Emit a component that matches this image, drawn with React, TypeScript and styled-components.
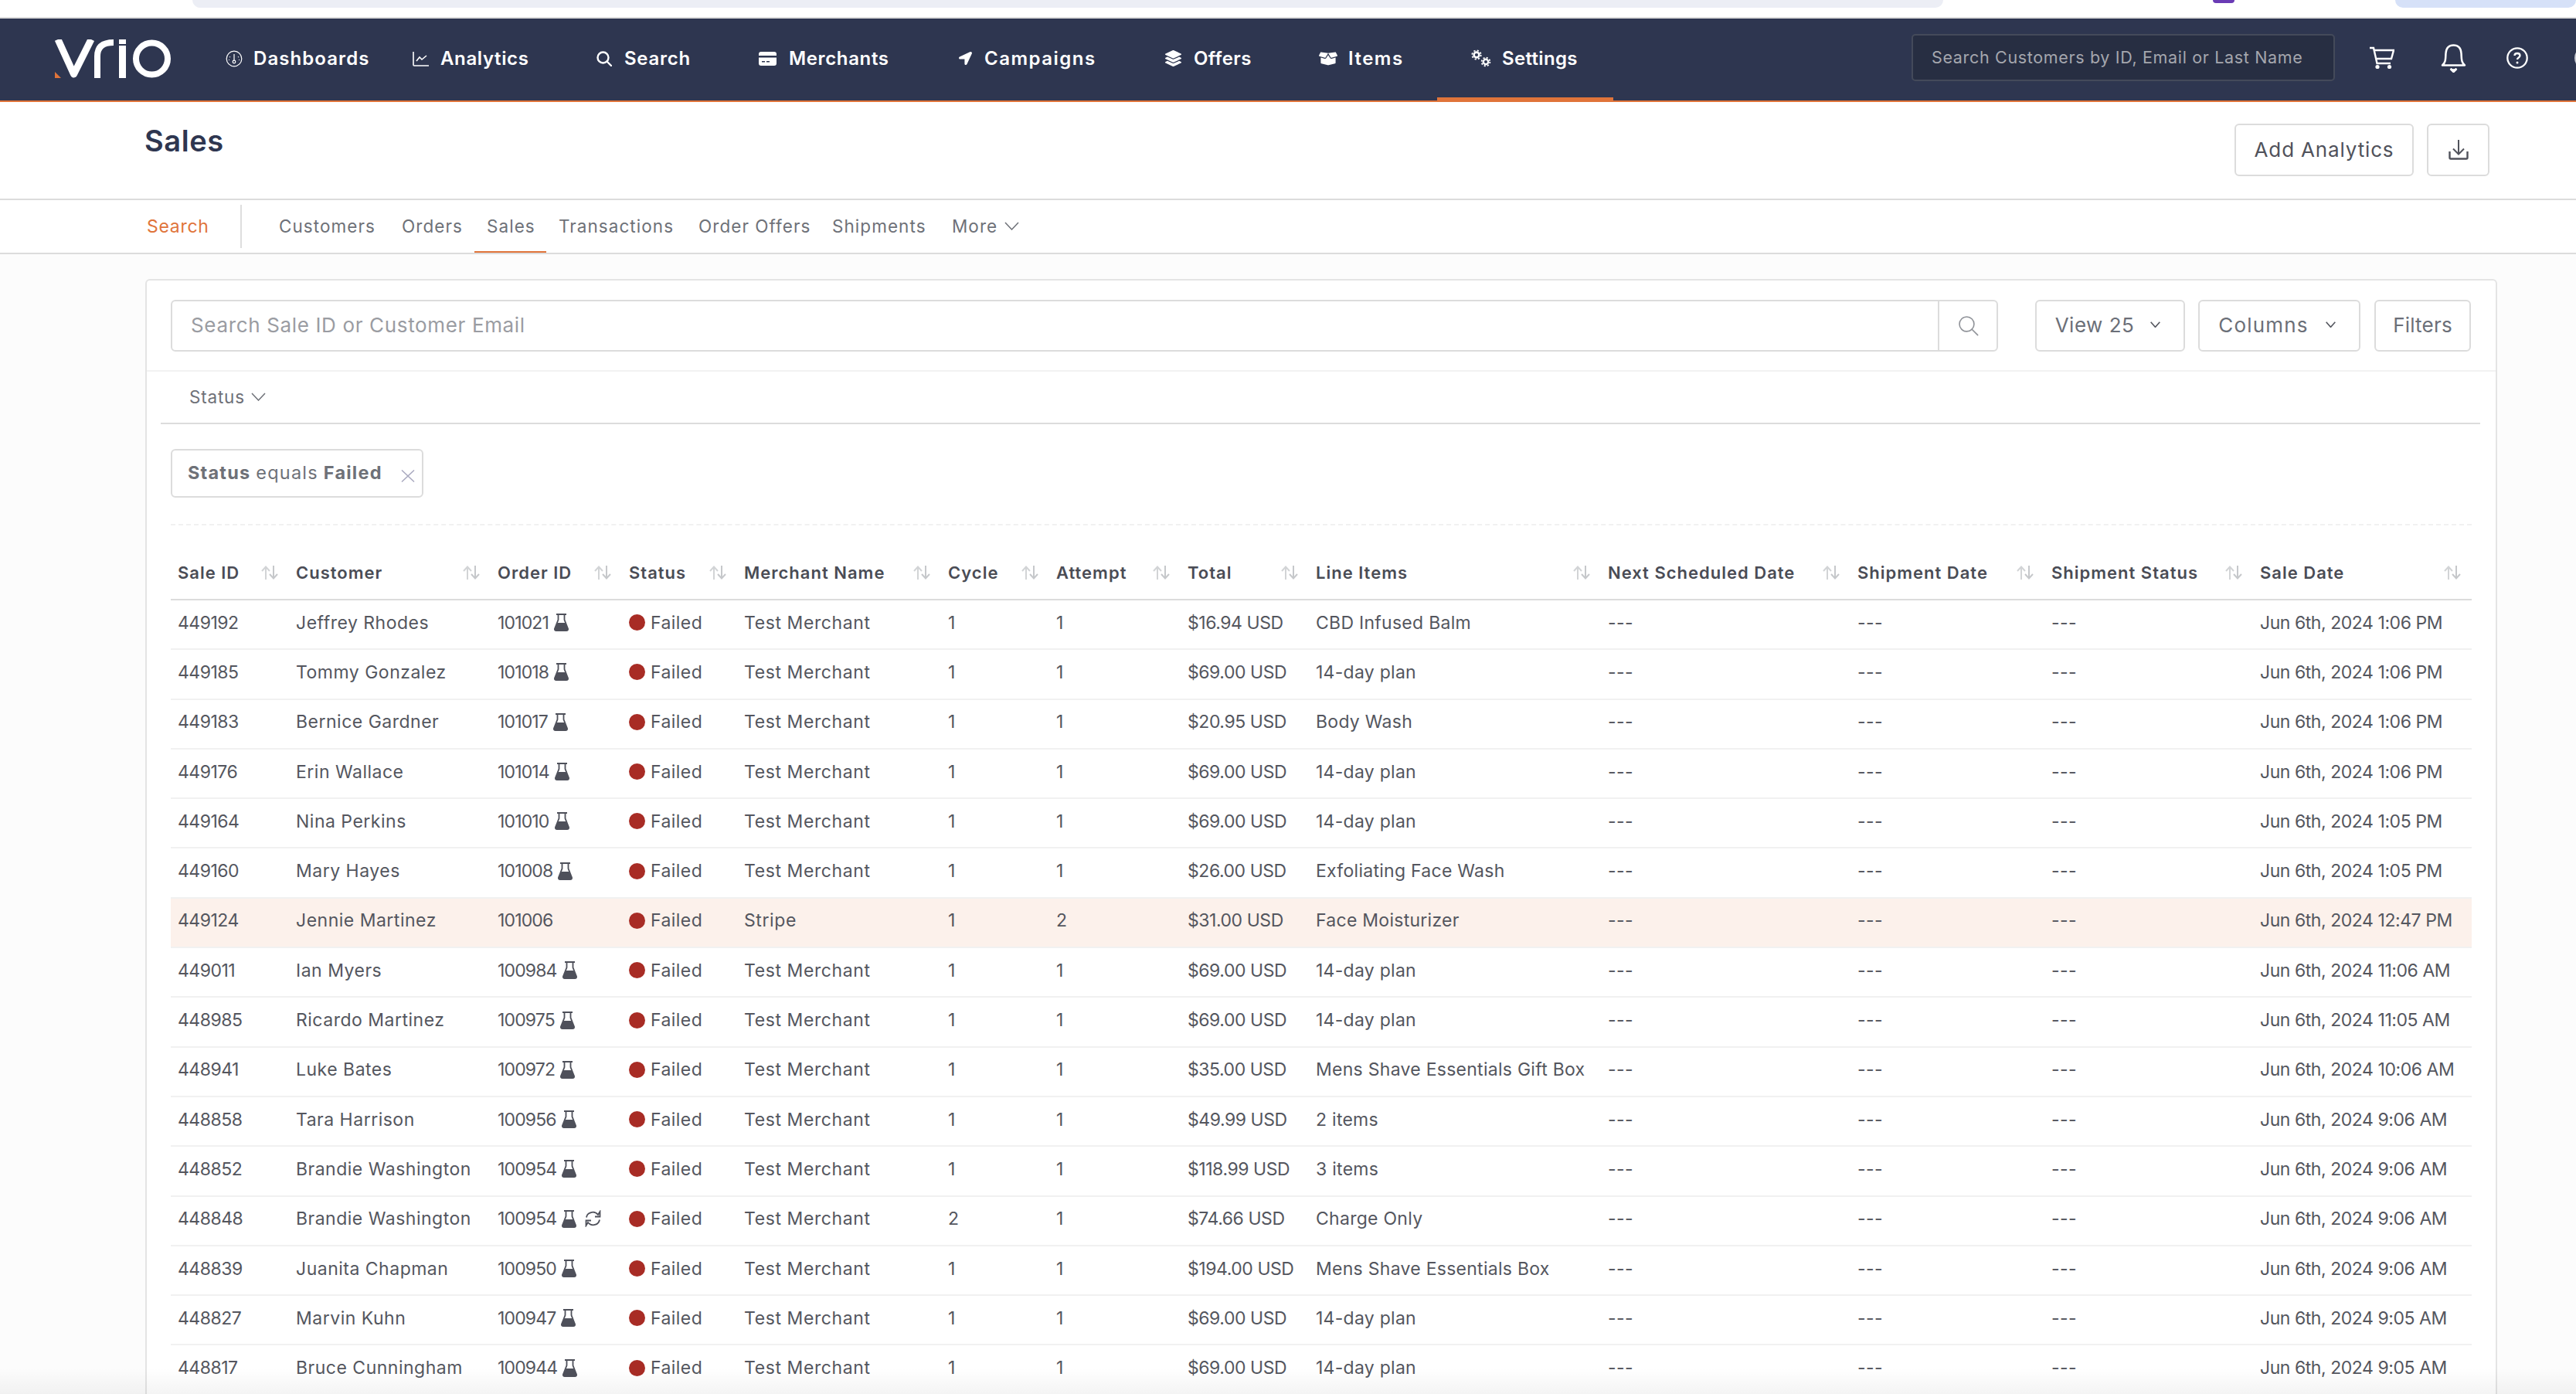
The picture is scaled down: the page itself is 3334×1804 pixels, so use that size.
import React from "react";
import styled, { createGlobalStyle } from "styled-components";
import { FaLocationArrow, FaLayerGroup, FaBoxOpen } from "react-icons/fa";

const Global = createGlobalStyle`
  html, body { margin: 0; padding: 0; height: 1804px; overflow: hidden; background: #fcfcfc; }
  * { box-sizing: border-box; }
  body { font-family: Inter, "Liberation Sans", sans-serif; font-size: 23px; color: #54565e; letter-spacing: 0.4px; }
`;

const Page = styled.div`position: relative; height: 1804px; overflow: hidden; display: flex; flex-direction: column;`;
const BottomFade = styled.div`
  position: absolute; left: 0; right: 0; bottom: 0; height: 34px; pointer-events: none;
  background: linear-gradient(to bottom, rgba(0,0,0,0), rgba(0,0,0,.045));
`;

const TopStrip = styled.div`height: 24px; flex: none; background: #fff; border-bottom: 2px solid #dedede; display: flex; align-items: flex-start;`;
const ChromeTab = styled.div<{ $w: number; $ml: number; $h: number; $c: string }>`
  width: ${p => p.$w}px; margin-left: ${p => p.$ml}px; height: ${p => p.$h}px; background: ${p => p.$c}; flex: none;
  border-radius: 0 0 14px 14px;
`;

const Nav = styled.header`height: 108px; flex: none; background: #2e3650; border-bottom: 2px solid #e0743a; display: flex; align-items: stretch; padding-left: 71px;`;
const LogoWrap = styled.div`display: flex; align-items: center; width: 177px; flex: none; padding-bottom: 2px;`;
const NavList = styled.nav`display: flex; align-items: stretch;`;
const NavItem = styled.a<{ $w: number; $gap: number; $ls: number; $active?: boolean }>`
  position: relative; width: ${p => p.$w}px; padding-left: 44px; display: flex; align-items: center; gap: ${p => p.$gap}px;
  color: #fff; font-weight: 600; font-size: 24px; letter-spacing: ${p => p.$ls}px; padding-bottom: 3px; white-space: nowrap;
  ${p => p.$active ? `&::after { content: ""; position: absolute; left: 0; right: 0; bottom: -2px; height: 6px; background: #e0743a; }` : ""}
`;
const NavIcon = styled.span<{ $w: number }>`width: ${p => p.$w}px; flex: none; display: flex; align-items: center; justify-content: center; color: #fff; margin-right: 2px;`;
const NavSearch = styled.div`
  margin-left: auto; width: 548px; height: 61px; align-self: center; background: #272e42; border: 2px solid #444a5a; border-radius: 5px; flex: none;
  color: #a5a7ae; font-size: 21.5px; letter-spacing: .66px; display: flex; align-items: center; padding-left: 24px; margin-bottom: 6px; white-space: nowrap;
`;
const NavTools = styled.div`display: flex; align-items: center; padding-bottom: 4px; flex: none;`;
const ToolIcon = styled.span<{ $ml: number }>`margin-left: ${p => p.$ml}px; display: flex; flex: none;`;
const AvatarEdge = styled.span`margin-left: 60px; margin-right: -28px; width: 30px; height: 30px; flex: none; border-radius: 50%; background: #c9cbd1;`;

const Header = styled.div`height: 127px; flex: none; background: #fff; border-bottom: 2px solid #dcdcdc; display: flex; justify-content: space-between; padding: 28px 112px 0 187px;`;
const Title = styled.h1`margin: 0; font-size: 38px; line-height: 44px; font-weight: 600; letter-spacing: 0.6px; color: #2e3650;`;
const HeaderActions = styled.div`display: flex; gap: 17px; align-items: flex-start;`;
const OutlineButton = styled.button<{ $w: number; $h?: number; $gap?: number }>`
  width: ${p => p.$w}px; height: ${p => p.$h ?? 68}px; background: #fff; border: 2px solid #dcdcdc; border-radius: 6px; font: inherit;
  display: flex; align-items: center; justify-content: center; gap: ${p => p.$gap ?? 0}px; padding: 0 0 2px; flex: none;
`;
const HeaderButton = styled(OutlineButton)`font-size: 26px; letter-spacing: 0.85px; color: #50525b;`;

const SubNav = styled.div`height: 70px; flex: none; background: #fff; border-bottom: 2px solid #dcdcdc; display: flex; align-items: stretch; padding-left: 190px;`;
const SubSearch = styled.span`width: 121px; display: flex; align-items: center; color: #e0743a; font-size: 23px; letter-spacing: 0.7px; flex: none;`;
const SubDivider = styled.span`width: 2px; height: 56px; margin-top: 6px; background: #dedede; margin-right: 32px; flex: none;`;
const SubLink = styled.a<{ $w: number; $active?: boolean }>`
  position: relative; display: flex; align-items: center; padding: 0 0 2px 16px; width: ${p => p.$w}px; gap: 9px; color: #6e7178; font-size: 22.5px; letter-spacing: 1.05px; flex: none;
  ${p => p.$active ? `&::after { content: ""; position: absolute; left: 0; right: 0; bottom: 0; height: 2px; background: #e0743a; }` : ""}
`;

const Card = styled.section`
  margin: 32px 0 0 188px; width: 3044px; flex: none; background: #fff; border: 2px solid #e4e4e4; border-bottom: 0; border-radius: 6px 6px 0 0;
  padding-top: 25px;
`;
const Toolbar = styled.div`display: flex; align-items: center; padding: 0 0 24px 31px; border-bottom: 2px solid #f2f2f2;`;
const SearchBox = styled.div`width: 2365px; height: 67px; border: 2px solid #dcdcdc; border-radius: 6px; display: flex; flex: none; margin-right: 48px;`;
const SearchPlaceholder = styled.span`flex: 1; display: flex; align-items: center; padding: 0 0 3px 24px; color: #9a9ca2; font-size: 26px; letter-spacing: 0.65px;`;
const SearchBtn = styled.span`width: 76px; border-left: 2px solid #dcdcdc; display: flex; align-items: center; justify-content: center;`;
const ToolButton = styled(OutlineButton)<{ $mr?: number; $ls: number; $pr?: number }>`font-size: 26px; letter-spacing: ${p => p.$ls}px; color: #6b6f78; margin-right: ${p => p.$mr ?? 0}px; padding: 0 ${p => p.$pr ?? 0}px 3px 0;`;

const StatusRow = styled.div`margin: 0 20px 0 18px; height: 68px; border-bottom: 2px solid #dcdcdc; display: flex; align-items: center; padding: 0 0 2px 37px; gap: 8px; color: #6f7178; font-size: 22.5px; letter-spacing: .8px;`;
const ChipRow = styled.div`padding: 32px 0 34px 31px;`;
const Chip = styled.div`
  width: 327px; height: 63px; border: 2px solid #dcdcdc; border-radius: 6px; display: flex; align-items: center; padding: 0 0 2px 20px; color: #6e7178; font-size: 23.5px; letter-spacing: 1.2px; gap: 7px; position: relative; white-space: nowrap;
`;
const ChipStrong = styled.b`font-weight: 700;`;
const ChipClose = styled.span`position: absolute; left: 296px; top: 25px; display: flex;`;

const TableWrap = styled.div`margin: 0 31px; border-top: 2px dashed #f1f1f1; padding-top: 29px;`;
const widths = "153px 261px 170px 149px 264px 140px 170px 166px 378px 323px 251px 270px 283px";
const HeadRow = styled.div`display: grid; grid-template-columns: ${widths}; height: 68px; border-bottom: 2px solid #dcdcdc;`;
const HeadCell = styled.div`display: flex; align-items: center; justify-content: space-between; padding: 0 14px 2px 9px; color: #4a4c55; font-weight: 600; font-size: 22px; letter-spacing: 1px; white-space: nowrap;`;
const Row = styled.div<{ $hi?: boolean }>`display: grid; grid-template-columns: ${widths}; height: 64.3px; border-bottom: 2px solid #f1f1f1; background: ${p => p.$hi ? "#fcf1eb" : "transparent"};`;
const Cell = styled.div<{ $ls?: number }>`display: flex; align-items: center; padding: 0 0 5px 9px; white-space: nowrap; color: #54565e; gap: 7px; letter-spacing: ${p => p.$ls ?? 0.4}px;`;
const Dot = styled.span`width: 21px; height: 21px; border-radius: 50%; background: #a82c25; flex: none;`;

const Logo = () => (
  <svg width="150" height="50" viewBox="0 0 150 50">
    <path d="M4 0 L24.500 45 L47 0" fill="none" stroke="#fff" strokeWidth="9" strokeLinejoin="round" />
    <path d="M55 50 V22 C55 9 63 4 76 4" fill="none" stroke="#fff" strokeWidth="8" />
    <rect x="83" y="0" width="9" height="6" fill="#fff" />
    <rect x="83" y="8" width="9" height="42" fill="#fff" />
    <circle cx="125.500" cy="25" r="20.500" fill="none" stroke="#fff" strokeWidth="8" />
    <path d="M0 42 L8 50 H0 Z" fill="#e0743a" />
  </svg>
);

const GaugeIcon = () => (
  <svg width="22" height="22" viewBox="0 0 22 22" fill="none" stroke="#fff" strokeWidth="1.200">
    <circle cx="11" cy="11" r="9.800" />
    <circle cx="11" cy="15" r="1.800" />
    <path d="M11 13 V5 M5 8.500 l1 .6 M17 8.500 l-1 .6 M4 12.500 h1 M17 12.500 h1" />
  </svg>
);
const ChartIcon = () => (
  <svg width="22" height="20" viewBox="0 0 22 20" fill="none" stroke="#fff" strokeWidth="1.600">
    <path d="M1 1 V18 a1 1 0 0 0 1 1 H21" />
    <path d="M5 13 L9 8 L12 11 L18 6" />
  </svg>
);
const LensIcon = ({ size = 20, stroke = "#fff", w = 2.4 }: { size?: number; stroke?: string; w?: number }) => (
  <svg width={size} height={size} viewBox="0 0 20 20" fill="none" stroke={stroke} strokeWidth={w} strokeLinecap="round">
    <circle cx="8.500" cy="8.500" r="7" />
    <path d="M13.500 13.500 L19 19" />
  </svg>
);
const CardIcon = () => (
  <svg width="23" height="18" viewBox="0 0 23 18" fill="#fff">
    <path d="M3 0 H20 a3 3 0 0 1 3 3 V5 H0 V3 a3 3 0 0 1 3 -3 Z" />
    <path fillRule="evenodd" d="M0 7.500 H23 V15 a3 3 0 0 1 -3 3 H3 a3 3 0 0 1 -3 -3 Z M4 12 v1.500 h4 V12 Z M10 12 v1.500 h4 V12 Z" />
  </svg>
);
const GearsIcon = () => (
  <svg width="26" height="23" viewBox="0 0 26 23" fill="none" stroke="#fff">
    <circle cx="7" cy="7" r="3.400" strokeWidth="2.600" />
    <circle cx="7" cy="7" r="5.700" strokeWidth="1.800" strokeDasharray="2.200 2.280" />
    <circle cx="19" cy="16" r="3.200" strokeWidth="2.400" />
    <circle cx="19" cy="16" r="5.400" strokeWidth="1.800" strokeDasharray="2.100 2.140" />
  </svg>
);
const CartIcon = () => (
  <svg width="32" height="30" viewBox="0 0 32 30" fill="none" stroke="#fff" strokeWidth="2.400">
    <path d="M0 2 H5 L9.500 22 H27" />
    <path d="M6 5 H31 L28 16 H8.500" />
    <circle cx="10" cy="26.500" r="2.600" fill="#fff" stroke="none" />
    <circle cx="25.500" cy="26.500" r="2.600" fill="#fff" stroke="none" />
  </svg>
);
const BellIcon = () => (
  <svg width="33" height="37" viewBox="0 0 33 37" fill="none" stroke="#fff" strokeWidth="2.500">
    <path d="M2 27.500 C7 23 6 18 6.500 12 C7 5 11 1.500 16.500 1.500 C22 1.500 26 5 26.500 12 C27 18 26 23 31 27.500 Z" strokeLinejoin="round" />
    <path d="M12.500 32 Q16.500 35 20.500 32 L16.500 36 Z" fill="#fff" />
  </svg>
);
const HelpIcon = () => (
  <svg width="28" height="28" viewBox="0 0 28 28" fill="none">
    <circle cx="14" cy="14" r="12.700" stroke="#fff" strokeWidth="2.300" />
    <path d="M10.500 11 C10.500 7 17.500 7 17.500 11 C17.500 13.500 14 13.500 14 16" stroke="#fff" strokeWidth="2.300" />
    <circle cx="14" cy="20" r="1.500" fill="#fff" />
  </svg>
);
const DownloadIcon = () => (
  <svg width="26" height="27" viewBox="0 0 26 27" fill="none" stroke="#50525b" strokeWidth="2">
    <path d="M13 1 V19 M6 12.500 L13 19.500 L20 12.500" />
    <path d="M1.500 16 V24 a1.500 1.500 0 0 0 1.500 1.500 H23 a1.500 1.500 0 0 0 1.500 -1.500 V16" strokeWidth="2.400" />
  </svg>
);
const Chevron = ({ w = 19, h = 11, c = "#6e7178", sw = 1.5 }: { w?: number; h?: number; c?: string; sw?: number }) => (
  <svg width={w} height={h} viewBox="0 0 19 11" fill="none" stroke={c} strokeWidth={sw} preserveAspectRatio="none">
    <path d="M1 1 L9.500 10 L18 1" />
  </svg>
);
const SortIcon = () => (
  <svg width="22" height="18" viewBox="0 0 22 18" fill="none" strokeWidth="2" style={{ flex: "none" }}>
    <path d="M6 18 V2 M1 7 L6 1.500 L11 7" stroke="#d2d4d6" />
    <path d="M16 0 V16 M11 11 L16 16.500 L21 11" stroke="#c6c8cb" />
  </svg>
);
const FlaskIcon = () => (
  <svg width="19" height="23" viewBox="0 0 19 23" style={{ flex: "none" }}>
    <path d="M3 1 H16 M5.500 1 V8 L1 19.500 Q.5 22 3 22 H16 Q18.500 22 18 19.500 L13.500 8 V1" fill="none" stroke="#4e505a" strokeWidth="1.800" />
    <path d="M4.500 12 H14.500 L18 19.500 Q18.500 22 16 22 H3 Q.5 22 1 19.500 Z" fill="#4e505a" />
  </svg>
);
const SyncIcon = () => (
  <svg width="21" height="22" viewBox="0 0 21 22" fill="none" stroke="#4e505a" strokeWidth="1.800" style={{ flex: "none", marginLeft: 4 }}>
    <path d="M2 9.500 C3 3 12 0 17 6 L19.500 2 V8.500 H13" />
    <path d="M19 12.500 C18 19 9 22 4 16 L1.500 20 V13.500 H8" />
  </svg>
);

type Item = { label: string; w: number; iconW: number; gap: number; ls: number; icon: React.ReactNode; active?: boolean };
const navItems: Item[] = [
  { label: "Dashboards", w: 242, iconW: 22, gap: 12, ls: 1.07, icon: <GaugeIcon /> },
  { label: "Analytics", w: 238, iconW: 22, gap: 12, ls: 0.63, icon: <ChartIcon /> },
  { label: "Search", w: 210, iconW: 20, gap: 14, ls: 0.74, icon: <LensIcon /> },
  { label: "Merchants", w: 258, iconW: 23, gap: 14, ls: 0.63, icon: <CardIcon /> },
  { label: "Campaigns", w: 267, iconW: 18, gap: 14, ls: 1.5, icon: <FaLocationArrow size={17} /> },
  { label: "Offers", w: 200, iconW: 22, gap: 14, ls: 0.4, icon: <FaLayerGroup size={21} /> },
  { label: "Items", w: 197, iconW: 24, gap: 12, ls: 1.47, icon: <FaBoxOpen size={24} /> },
  { label: "Settings", w: 228, iconW: 26, gap: 12, ls: 0.32, icon: <GearsIcon />, active: true },
];

const subLinks = [
  { l: "Customers", w: 159 },
  { l: "Orders", w: 110 },
  { l: "Sales", w: 93, active: true },
  { l: "Transactions", w: 181 },
  { l: "Order Offers", w: 173 },
  { l: "Shipments", w: 155 },
];

const heads = ["Sale ID", "Customer", "Order ID", "Status", "Merchant Name", "Cycle", "Attempt", "Total", "Line Items", "Next Scheduled Date", "Shipment Date", "Shipment Status", "Sale Date"];

type R = [string, string, string, string, string, string, string, string, string, boolean?, boolean?];
const rows: R[] = [
  ["449192", "Jeffrey Rhodes", "101021", "Test Merchant", "1", "1", "$16.94 USD", "CBD Infused Balm", "Jun 6th, 2024 1:06 PM", true],
  ["449185", "Tommy Gonzalez", "101018", "Test Merchant", "1", "1", "$69.00 USD", "14-day plan", "Jun 6th, 2024 1:06 PM", true],
  ["449183", "Bernice Gardner", "101017", "Test Merchant", "1", "1", "$20.95 USD", "Body Wash", "Jun 6th, 2024 1:06 PM", true],
  ["449176", "Erin Wallace", "101014", "Test Merchant", "1", "1", "$69.00 USD", "14-day plan", "Jun 6th, 2024 1:06 PM", true],
  ["449164", "Nina Perkins", "101010", "Test Merchant", "1", "1", "$69.00 USD", "14-day plan", "Jun 6th, 2024 1:05 PM", true],
  ["449160", "Mary Hayes", "101008", "Test Merchant", "1", "1", "$26.00 USD", "Exfoliating Face Wash", "Jun 6th, 2024 1:05 PM", true],
  ["449124", "Jennie Martinez", "101006", "Stripe", "1", "2", "$31.00 USD", "Face Moisturizer", "Jun 6th, 2024 12:47 PM", false],
  ["449011", "Ian Myers", "100984", "Test Merchant", "1", "1", "$69.00 USD", "14-day plan", "Jun 6th, 2024 11:06 AM", true],
  ["448985", "Ricardo Martinez", "100975", "Test Merchant", "1", "1", "$69.00 USD", "14-day plan", "Jun 6th, 2024 11:05 AM", true],
  ["448941", "Luke Bates", "100972", "Test Merchant", "1", "1", "$35.00 USD", "Mens Shave Essentials Gift Box", "Jun 6th, 2024 10:06 AM", true],
  ["448858", "Tara Harrison", "100956", "Test Merchant", "1", "1", "$49.99 USD", "2 items", "Jun 6th, 2024 9:06 AM", true],
  ["448852", "Brandie Washington", "100954", "Test Merchant", "1", "1", "$118.99 USD", "3 items", "Jun 6th, 2024 9:06 AM", true],
  ["448848", "Brandie Washington", "100954", "Test Merchant", "2", "1", "$74.66 USD", "Charge Only", "Jun 6th, 2024 9:06 AM", true, true],
  ["448839", "Juanita Chapman", "100950", "Test Merchant", "1", "1", "$194.00 USD", "Mens Shave Essentials Box", "Jun 6th, 2024 9:06 AM", true],
  ["448827", "Marvin Kuhn", "100947", "Test Merchant", "1", "1", "$69.00 USD", "14-day plan", "Jun 6th, 2024 9:05 AM", true],
  ["448817", "Bruce Cunningham", "100944", "Test Merchant", "1", "1", "$69.00 USD", "14-day plan", "Jun 6th, 2024 9:05 AM", true],
];

export default function App() {
  return (
    <Page>
      <Global />
      <TopStrip>
        <ChromeTab $w={2266} $ml={249} $h={10} $c="#eceef5" />
        <ChromeTab $w={28} $ml={349} $h={4} $c="#6a3bb5" />
        <ChromeTab $w={234} $ml={208} $h={10} $c="#d6e1f8" />
      </TopStrip>
      <Nav>
        <LogoWrap><Logo /></LogoWrap>
        <NavList>
          {navItems.map(n => (
            <NavItem key={n.label} $w={n.w} $gap={n.gap} $ls={n.ls} $active={n.active}>
              <NavIcon $w={n.iconW}>{n.icon}</NavIcon>
              {n.label}
            </NavItem>
          ))}
        </NavList>
        <NavSearch>Search Customers by ID, Email or Last Name</NavSearch>
        <NavTools>
          <ToolIcon $ml={45}><CartIcon /></ToolIcon>
          <ToolIcon $ml={60}><BellIcon /></ToolIcon>
          <ToolIcon $ml={52}><HelpIcon /></ToolIcon>
          <AvatarEdge />
        </NavTools>
      </Nav>
      <Header>
        <Title>Sales</Title>
        <HeaderActions>
          <HeaderButton $w={232}>Add Analytics</HeaderButton>
          <HeaderButton $w={81}><DownloadIcon /></HeaderButton>
        </HeaderActions>
      </Header>
      <SubNav>
        <SubSearch>Search</SubSearch>
        <SubDivider />
        {subLinks.map(s => <SubLink key={s.l} $w={s.w} $active={s.active}>{s.l}</SubLink>)}
        <SubLink $w={110}>More <Chevron /></SubLink>
      </SubNav>
      <Card>
        <Toolbar>
          <SearchBox>
            <SearchPlaceholder>Search Sale ID or Customer Email</SearchPlaceholder>
            <SearchBtn><LensIcon size={27} stroke="#8f9298" w={1.2} /></SearchBtn>
          </SearchBox>
          <ToolButton $w={194} $h={67} $mr={17} $gap={21} $ls={0.5} $pr={6}>View 25 <Chevron w={13} h={8} sw={2.4} c="#55575f" /></ToolButton>
          <ToolButton $w={210} $h={67} $mr={18} $gap={22} $ls={1.2} $pr={6}>Columns <Chevron w={13} h={8} sw={2.4} c="#55575f" /></ToolButton>
          <ToolButton $w={125} $h={67} $ls={0.2}>Filters</ToolButton>
        </Toolbar>
        <StatusRow>Status <Chevron /></StatusRow>
        <ChipRow>
          <Chip>
            <ChipStrong>Status</ChipStrong> equals <ChipStrong>Failed</ChipStrong>
            <ChipClose>
              <svg width="18" height="16" viewBox="0 0 18 16" fill="none" stroke="#a9a9bf" strokeWidth="1.500"><path d="M1 .5 L17 15.500 M17 .5 L1 15.500" /></svg>
            </ChipClose>
          </Chip>
        </ChipRow>
        <TableWrap>
          <HeadRow>
            {heads.map(h => <HeadCell key={h}>{h}<SortIcon /></HeadCell>)}
          </HeadRow>
          {rows.map(r => (
            <Row key={r[0]} $hi={r[0] === "449124"}>
              <Cell $ls={-0.5}>{r[0]}</Cell>
              <Cell $ls={0.5}>{r[1]}</Cell>
              <Cell $ls={-0.85}>{r[2]}{r[9] && <FlaskIcon />}{r[10] && <SyncIcon />}</Cell>
              <Cell $ls={0.45}><Dot />Failed</Cell>
              <Cell $ls={0.6}>{r[3]}</Cell>
              <Cell>{r[4]}</Cell>
              <Cell>{r[5]}</Cell>
              <Cell $ls={-0.45}>{r[6]}</Cell>
              <Cell $ls={0.27}>{r[7]}</Cell>
              <Cell>---</Cell>
              <Cell>---</Cell>
              <Cell>---</Cell>
              <Cell $ls={-0.45}>{r[8]}</Cell>
            </Row>
          ))}
        </TableWrap>
      </Card>
      <BottomFade />
    </Page>
  );
}
